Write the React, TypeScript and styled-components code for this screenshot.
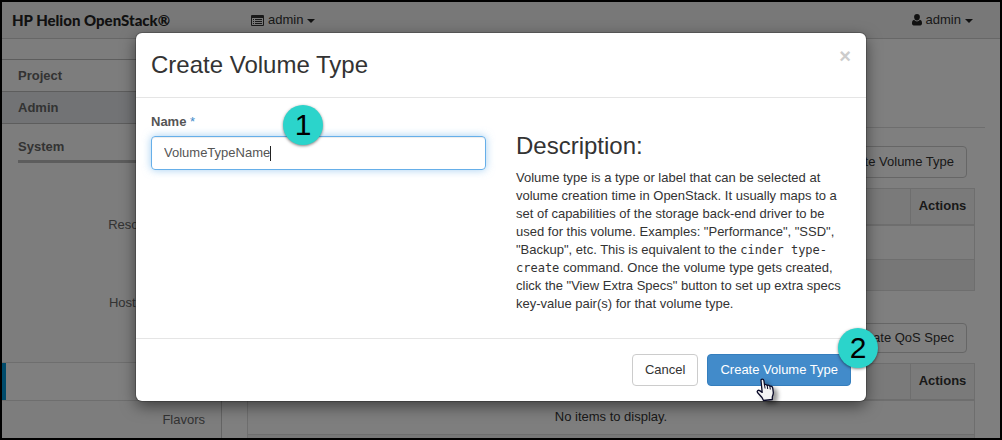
import React from "react";
import styled, { createGlobalStyle, css } from "styled-components";

const Global = createGlobalStyle`
  *, *::before, *::after { box-sizing: border-box; }
  body {
    margin: 0;
    background: #fff;
    color: #333;
    font: 13px/18px "Liberation Sans", Arial, sans-serif;
  }
  button, input { font: inherit; color: inherit; }
`;

const Screen = styled.div`
  position: relative;
  display: flex;
  flex-direction: column;
  height: 100vh;
  overflow: hidden;
  border: 2px solid #000;
  background: #fff;
`;

const TopBar = styled.header`
  display: flex;
  flex: none;
  align-items: center;
  height: 37px;
  padding: 0 27px 0 10px;
  background: #f0f0f0;
  border-bottom: 1px solid #cfcfcf;
`;

const Brand = styled.a`
  width: 239px;
  color: #222;
  font: 900 15px/20px Lato, sans-serif;
  text-decoration: none;
  white-space: nowrap;
`;

const MenuButton = styled.button<{ $end?: boolean }>`
  display: flex;
  align-items: center;
  gap: 4px;
  padding: 0;
  border: 0;
  background: none;
  ${(p) => p.$end && css`margin-left: auto;`}
`;

const Caret = styled.span`
  border: 4px solid transparent;
  border-top-color: #222;
  border-bottom: 0;
  margin-top: 2px;
`;

const Columns = styled.div`
  display: flex;
  flex: 1;
  min-height: 0;
`;

const Sidebar = styled.nav`
  flex: none;
  width: 220px;
  padding-top: 20px;
  background: #fafafa;
  border-right: 1px solid #c8c8c8;
`;

const Group = styled.a<{ $active?: boolean }>`
  display: block;
  height: 32px;
  padding: 7px 16px;
  border-top: 1px solid #bbb;
  background: ${(p) => (p.$active ? "#e4e7eb" : "transparent")};
  color: #666;
  font-weight: bold;
  text-decoration: none;
`;

const Panel = styled.h4`
  margin: 0 0 4px 16px;
  height: 39px;
  padding-top: 14px;
  border-bottom: 3px solid #bbb;
  color: #666;
  font-size: 13px;
  line-height: 18px;
`;

const Links = styled.div`
  border-top: 1px solid #bbb;
`;

const NavItem = styled.a<{ $active?: boolean }>`
  display: block;
  height: 39px;
  padding: 9px 16px;
  border: 0 solid transparent;
  border-width: 1px 0;
  color: #666;
  text-align: right;
  text-decoration: none;
  ${(p) => p.$active && css`
    background: #fff;
    border-color: #ddd;
    box-shadow: inset 4px 0 0 #0096d6;
  `}
`;

const Main = styled.main`
  flex: 1;
  min-width: 0;
  padding: 0 15px;
`;

const PageHead = styled.div`
  height: 89px;
  margin-bottom: 18px;
  border-bottom: 1px solid #ddd;
`;

const Section = styled.section`
  padding: 0 10px;
  margin-bottom: 32px;
`;

const Toolbar = styled.div`
  display: flex;
  justify-content: flex-end;
  padding: 0 8px 10px 0;
`;

const Button = styled.button<{ $primary?: boolean; $small?: boolean }>`
  height: ${(p) => (p.$small ? 30 : 32)}px;
  padding: 0 12px;
  border: 1px solid ${(p) => (p.$primary ? "#357ebd" : "#ccc")};
  border-radius: 4px;
  background: ${(p) => (p.$primary ? "#428bca" : "#fff")};
  color: ${(p) => (p.$primary ? "#fff" : "#333")};
  white-space: nowrap;
`;

const Table = styled.table`
  width: 100%;
  border: 1px solid #ddd;
  border-collapse: collapse;
`;

const HeadCell = styled.th<{ $narrow?: boolean }>`
  width: ${(p) => (p.$narrow ? "64px" : "auto")};
  height: 36px;
  padding: 0 7px;
  border: 1px solid #ddd;
  border-bottom-width: 2px;
  background: #f5f5f5;
`;

const Cell = styled.td<{ $foot?: boolean }>`
  height: ${(p) => (p.$foot ? 31 : 35)}px;
  padding: 0 8px;
  border-top: 1px solid #ddd;
  background: ${(p) => (p.$foot ? "#efefef" : "#fcfcfc")};
  text-align: center;
`;

const Backdrop = styled.div`
  position: absolute;
  inset: 0;
  padding: 31px 16px;
  background: rgba(0, 0, 0, 0.5);
`;

const Dialog = styled.form`
  position: relative;
  max-width: 730px;
  margin: 0 auto;
  border-radius: 6px;
  background: #fff;
  box-shadow: 0 5px 15px rgba(0, 0, 0, 0.5), 0 0 0 1px rgba(0, 0, 0, 0.2);
`;

const DialogHead = styled.div`
  display: flex;
  justify-content: space-between;
  padding: 15px 15px 16px;
  border-bottom: 1px solid #e5e5e5;
`;

const Title = styled.h3`
  margin: 0;
  font-size: 24px;
  font-weight: normal;
  line-height: 33px;
`;

const Close = styled.button`
  height: 16px;
  padding: 0;
  border: 0;
  background: none;
  color: #ccc;
  font-size: 20px;
  font-weight: bold;
  line-height: 16px;
`;

const DialogBody = styled.div`
  display: grid;
  grid-template-columns: 1fr 1fr;
  gap: 30px;
  padding: 15px 15px 25px;
`;

const Label = styled.label`
  display: block;
  margin-bottom: 5px;
  color: #555;
  font-weight: bold;
`;

const Required = styled.span`
  color: #428bca;
  font-weight: normal;
`;

const InputBox = styled.div`
  display: flex;
  align-items: center;
  height: 34px;
  padding: 0 12px;
  border: 1px solid #66afe9;
  border-radius: 4px;
  box-shadow: inset 0 1px 1px rgba(0, 0, 0, 0.075), 0 0 8px rgba(102, 175, 233, 0.6);
`;

const Input = styled.input`
  field-sizing: content;
  min-width: 0;
  padding: 0;
  border: 0;
  outline: 0;
  background: none;
  color: #555;
`;

const TextCursor = styled.span`
  width: 1px;
  height: 15px;
  background: #222;
`;

const DescTitle = styled.h3`
  margin: 19px 0 9px;
  font-size: 24px;
  font-weight: normal;
  line-height: 28px;
`;

const Text = styled.p`
  margin: 0;
`;

const Code = styled.code`
  font: 12px/16px "DejaVu Sans Mono", monospace;
`;

const DialogFoot = styled.div`
  display: flex;
  justify-content: flex-end;
  gap: 9px;
  padding: 15px;
  border-top: 1px solid #e5e5e5;
`;

const Marker = styled.span<{ $x: string; $y: string }>`
  position: absolute;
  left: ${(p) => p.$x};
  top: ${(p) => p.$y};
  width: 40px;
  height: 40px;
  border-radius: 50%;
  background: #2bd4cb;
  box-shadow: 0 1px 3px rgba(0, 0, 0, 0.5);
  color: #000;
  font-size: 30px;
  line-height: 40px;
  text-align: center;
`;

const Pointer = styled.svg`
  position: absolute;
  right: 90px;
  bottom: -1px;
  filter: drop-shadow(4px 3px 2px rgba(0, 0, 0, 0.4));
`;

const navItems: { label?: string; active?: boolean }[] = [
  {},
  { label: "Resource Usage" },
  {},
  { label: "Host Aggregates" },
  {},
  { active: true },
  { label: "Flavors" },
];

const ListIcon = () => (
  <svg width="13" height="11" viewBox="0 0 13 11" aria-hidden="true">
    <path fill="#333" fillRule="evenodd" d="M1 0h11a1 1 0 0 1 1 1v9a1 1 0 0 1-1 1H1a1 1 0 0 1-1-1V1a1 1 0 0 1 1-1zM1 3v7h11V3zM2 4h1v1H2zM4 4h7v1H4zM2 6h1v1H2zM4 6h7v1H4zM2 8h1v1H2zM4 8h7v1H4z" />
  </svg>
);

const UserIcon = () => (
  <svg width="10" height="12" viewBox="0 0 10 12" aria-hidden="true">
    <path fill="#222" d="M5 0c1.900 0 2.900 1.300 2.900 3.100S6.800 6.600 5 6.600 2.100 4.900 2.100 3.100 3.100 0 5 0zM2.200 5.800C3 6.900 3.900 7.400 5 7.400s2-.5 2.800-1.600C9.600 6.100 10 7.600 10 9.500c0 1.100-.7 1.900-1.700 1.900H1.700C.7 11.400 0 10.600 0 9.500c0-1.900.4-3.400 2.200-3.700z" />
  </svg>
);

export default function App() {
  return (
    <>
      <Global />
      <Screen>
        <TopBar>
          <Brand href="#">HP Helion OpenStack®</Brand>
          <MenuButton><ListIcon />admin<Caret /></MenuButton>
          <MenuButton $end><UserIcon />admin<Caret /></MenuButton>
        </TopBar>
        <Columns>
          <Sidebar>
            <Group href="#">Project</Group>
            <Group href="#" $active>Admin</Group>
            <Links>
              <Panel>System</Panel>
              {navItems.map((item, i) => (
                <NavItem key={i} href="#" $active={item.active}>{item.label}</NavItem>
              ))}
            </Links>
          </Sidebar>
          <Main>
            <PageHead />
            <Section>
              <Toolbar><Button>Create Volume Type</Button></Toolbar>
              <Table>
                <thead><tr><HeadCell /><HeadCell $narrow>Actions</HeadCell></tr></thead>
                <tbody>
                  <tr><Cell colSpan={2} /></tr>
                  <tr><Cell colSpan={2} $foot /></tr>
                </tbody>
              </Table>
            </Section>
            <Section>
              <Toolbar><Button $small>Create QoS Spec</Button></Toolbar>
              <Table>
                <thead><tr><HeadCell /><HeadCell $narrow>Actions</HeadCell></tr></thead>
                <tbody>
                  <tr><Cell colSpan={2}>No items to display.</Cell></tr>
                  <tr><Cell colSpan={2} $foot /></tr>
                </tbody>
              </Table>
            </Section>
          </Main>
        </Columns>
        <Backdrop>
          <Dialog role="dialog" aria-labelledby="dialog-title" onSubmit={(e) => e.preventDefault()}>
            <DialogHead>
              <Title id="dialog-title">Create Volume Type</Title>
              <Close type="button" aria-label="Close">×</Close>
            </DialogHead>
            <DialogBody>
              <div>
                <Label htmlFor="name">Name <Required>*</Required></Label>
                <InputBox>
                  <Input id="name" defaultValue="VolumeTypeName" />
                  <TextCursor />
                </InputBox>
              </div>
              <div>
                <DescTitle>Description:</DescTitle>
                <Text>
                  Volume type is a type or label that can be selected at volume creation time in
                  OpenStack. It usually maps to a set of capabilities of the storage back-end driver
                  to be used for this volume. Examples: "Performance", "SSD", "Backup", etc. This is
                  equivalent to the <Code>cinder type-create</Code> command. Once the volume type
                  gets created, click the "View Extra Specs" button to set up extra specs key-value
                  pair(s) for that volume type.
                </Text>
              </div>
            </DialogBody>
            <DialogFoot>
              <Button type="button">Cancel</Button>
              <Button type="submit" $primary>Create Volume Type</Button>
            </DialogFoot>
            <Marker $x="147px" $y="72px">1</Marker>
            <Marker $x="calc(100% - 28px)" $y="295px">2</Marker>
            <Pointer width="20" height="24" viewBox="0 0 20 24" aria-hidden="true">
              <path
                fill="#f4f4f4"
                stroke="#0a0a28"
                strokeWidth="1.300"
                strokeLinejoin="round"
                d="M5 2.500C4.800.6 7.600.6 7.900 2.500l.6 4.300c.8-.6 2.300-.4 2.700.7.900-.6 2.300-.3 2.700.8 1-.4 2.500.1 2.800 1.500l.6 4.500c.2 2-.8 3.300-1 4.700v2.500L7.500 22.500 6 19.500 1.700 14.800c-1.300-1.700.5-3.200 2-2.200l2.500 1.800z"
              />
              <path fill="none" stroke="#0a0a28" d="M8.500 7l.6 3.500M11.200 7.500l.5 3.500M13.900 8.500l.4 3" />
            </Pointer>
          </Dialog>
        </Backdrop>
      </Screen>
    </>
  );
}
